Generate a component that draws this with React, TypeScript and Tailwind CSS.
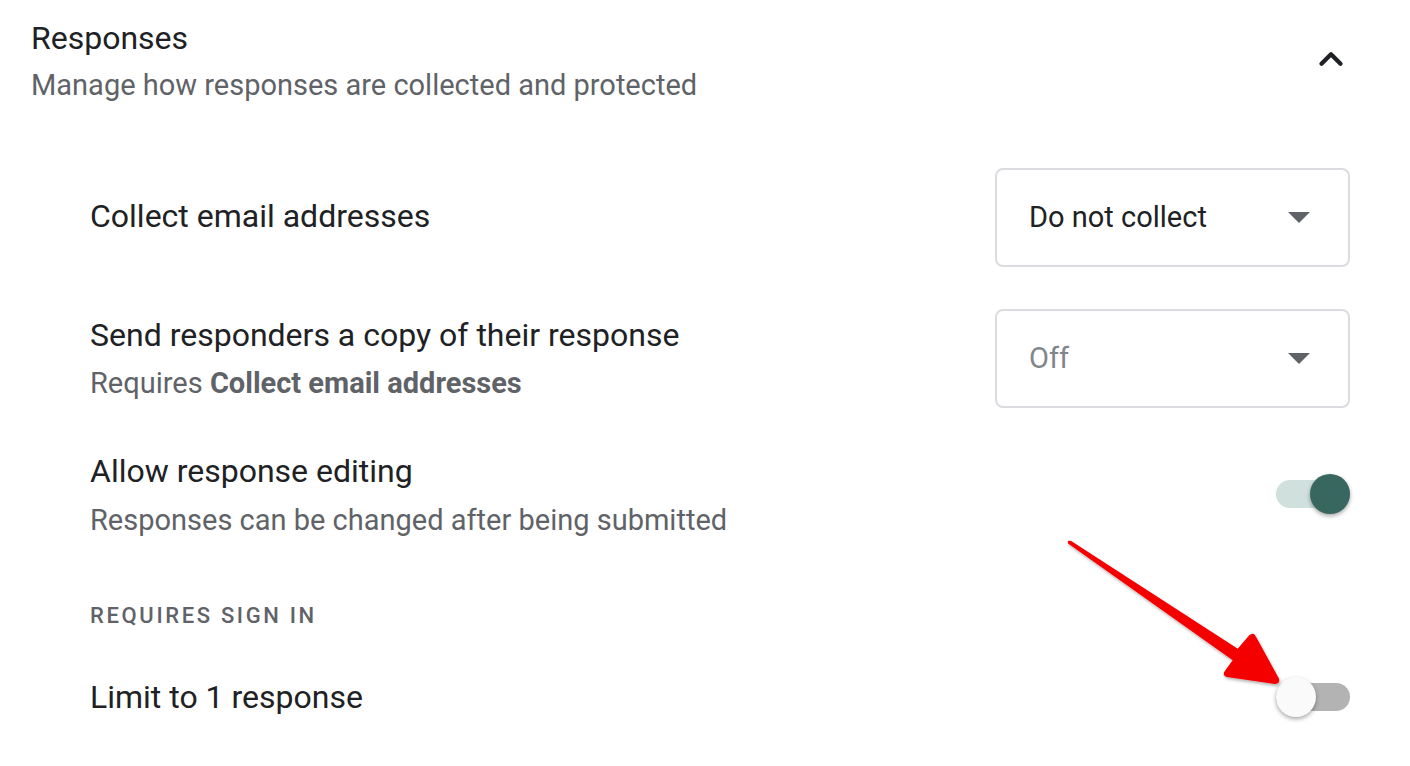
import { ChevronUp } from 'lucide-react'

const font = { fontFamily: 'Roboto, "Noto Sans", sans-serif' }

function Select({ value, muted }: { value: string; muted?: boolean }) {
  return (
    <div className="w-[355px] h-[99px] border-2 border-[#dadce0] rounded-[8px] flex items-center justify-between pl-[32px] pr-[38px]">
      <span className={muted ? 'text-[29px] text-[#80868b]' : 'text-[29px] text-[#202124]'}>{value}</span>
      <svg width="22" height="11" viewBox="0 0 22 11">
        <path d="M0 0 L22 0 L11 11 Z" fill="#5f6368" />
      </svg>
    </div>
  )
}

function Toggle({ on }: { on?: boolean }) {
  return (
    <div className="relative w-[74px] h-[40px] flex items-center">
      <div className={on ? 'w-full h-[28px] rounded-full bg-[#cfe0dd]' : 'w-full h-[28px] rounded-full bg-[#b3b3b3]'} />
      <div
        className={
          on
            ? 'absolute right-0 top-0 w-[40px] h-[40px] rounded-full bg-[#37675f] shadow-[0_2px_4px_rgba(0,0,0,0.35)]'
            : 'absolute left-0 top-0 w-[40px] h-[40px] rounded-full bg-[#fafafa] shadow-[0_2px_4px_rgba(0,0,0,0.35)]'
        }
      />
    </div>
  )
}

export default function App() {
  return (
    <div className="relative w-[1410px] h-[766px] bg-white overflow-hidden" style={font}>
      <div className="flex items-start justify-between pl-[31px] pr-[60px] pt-[18px]">
        <div>
          <div className="text-[32px] leading-[40px] text-[#202124]">Responses</div>
          <div className="text-[29px] leading-[36px] mt-[9px] text-[#5f6368]">Manage how responses are collected and protected</div>
        </div>
        <ChevronUp size={38} strokeWidth={2.7} className="text-[#202124] mt-[22px]" />
      </div>

      <div className="pl-[90px] pr-[60px] mt-[65px]">
        <div className="flex items-center justify-between">
          <div className="text-[32px] text-[#202124] -mt-[4px]">Collect email addresses</div>
          <Select value="Do not collect" />
        </div>

        <div className="flex items-center justify-between mt-[42px]">
          <div className="-mt-[3px]">
            <div className="text-[32px] leading-[40px] text-[#202124]">Send responders a copy of their response</div>
            <div className="text-[29px] leading-[34px] mt-[11px] text-[#5f6368]">
              Requires <span className="font-bold">Collect email addresses</span>
            </div>
          </div>
          <Select value="Off" muted />
        </div>

        <div className="flex items-center justify-between mt-[43px]">
          <div>
            <div className="text-[32px] leading-[40px] text-[#202124]">Allow response editing</div>
            <div className="text-[29px] leading-[34px] mt-[12px] text-[#5f6368]">Responses can be changed after being submitted</div>
          </div>
          <Toggle on />
        </div>

        <div className="text-[22px] leading-[30px] font-medium tracking-[0.12em] text-[#5f6368] mt-[64px]">REQUIRES SIGN IN</div>

        <div className="flex items-center justify-between mt-[46px]">
          <div className="text-[32px] leading-[40px] text-[#202124]">Limit to 1 response</div>
          <Toggle />
        </div>
      </div>

      {/* annotation arrow */}
      <svg className="absolute left-0 top-0 pointer-events-none" width="1410" height="766">
        <defs>
          <filter id="sh" x="-10%" y="-10%" width="120%" height="120%">
            <feDropShadow dx="1" dy="2" stdDeviation="1.5" floodColor="#000" floodOpacity="0.3" />
          </filter>
        </defs>
        <path
          d="M1069 543 Q1068 541 1071 542 L1238 650 L1250 636 Q1253 633 1255 637 L1278 679 Q1279 683 1275 683 L1227 676 Q1223 675 1226 671 L1234 660 Z"
          fill="#f40000"
          stroke="#f40000"
          strokeWidth="2"
          strokeLinejoin="round"
          filter="url(#sh)"
        />
      </svg>
    </div>
  )
}
